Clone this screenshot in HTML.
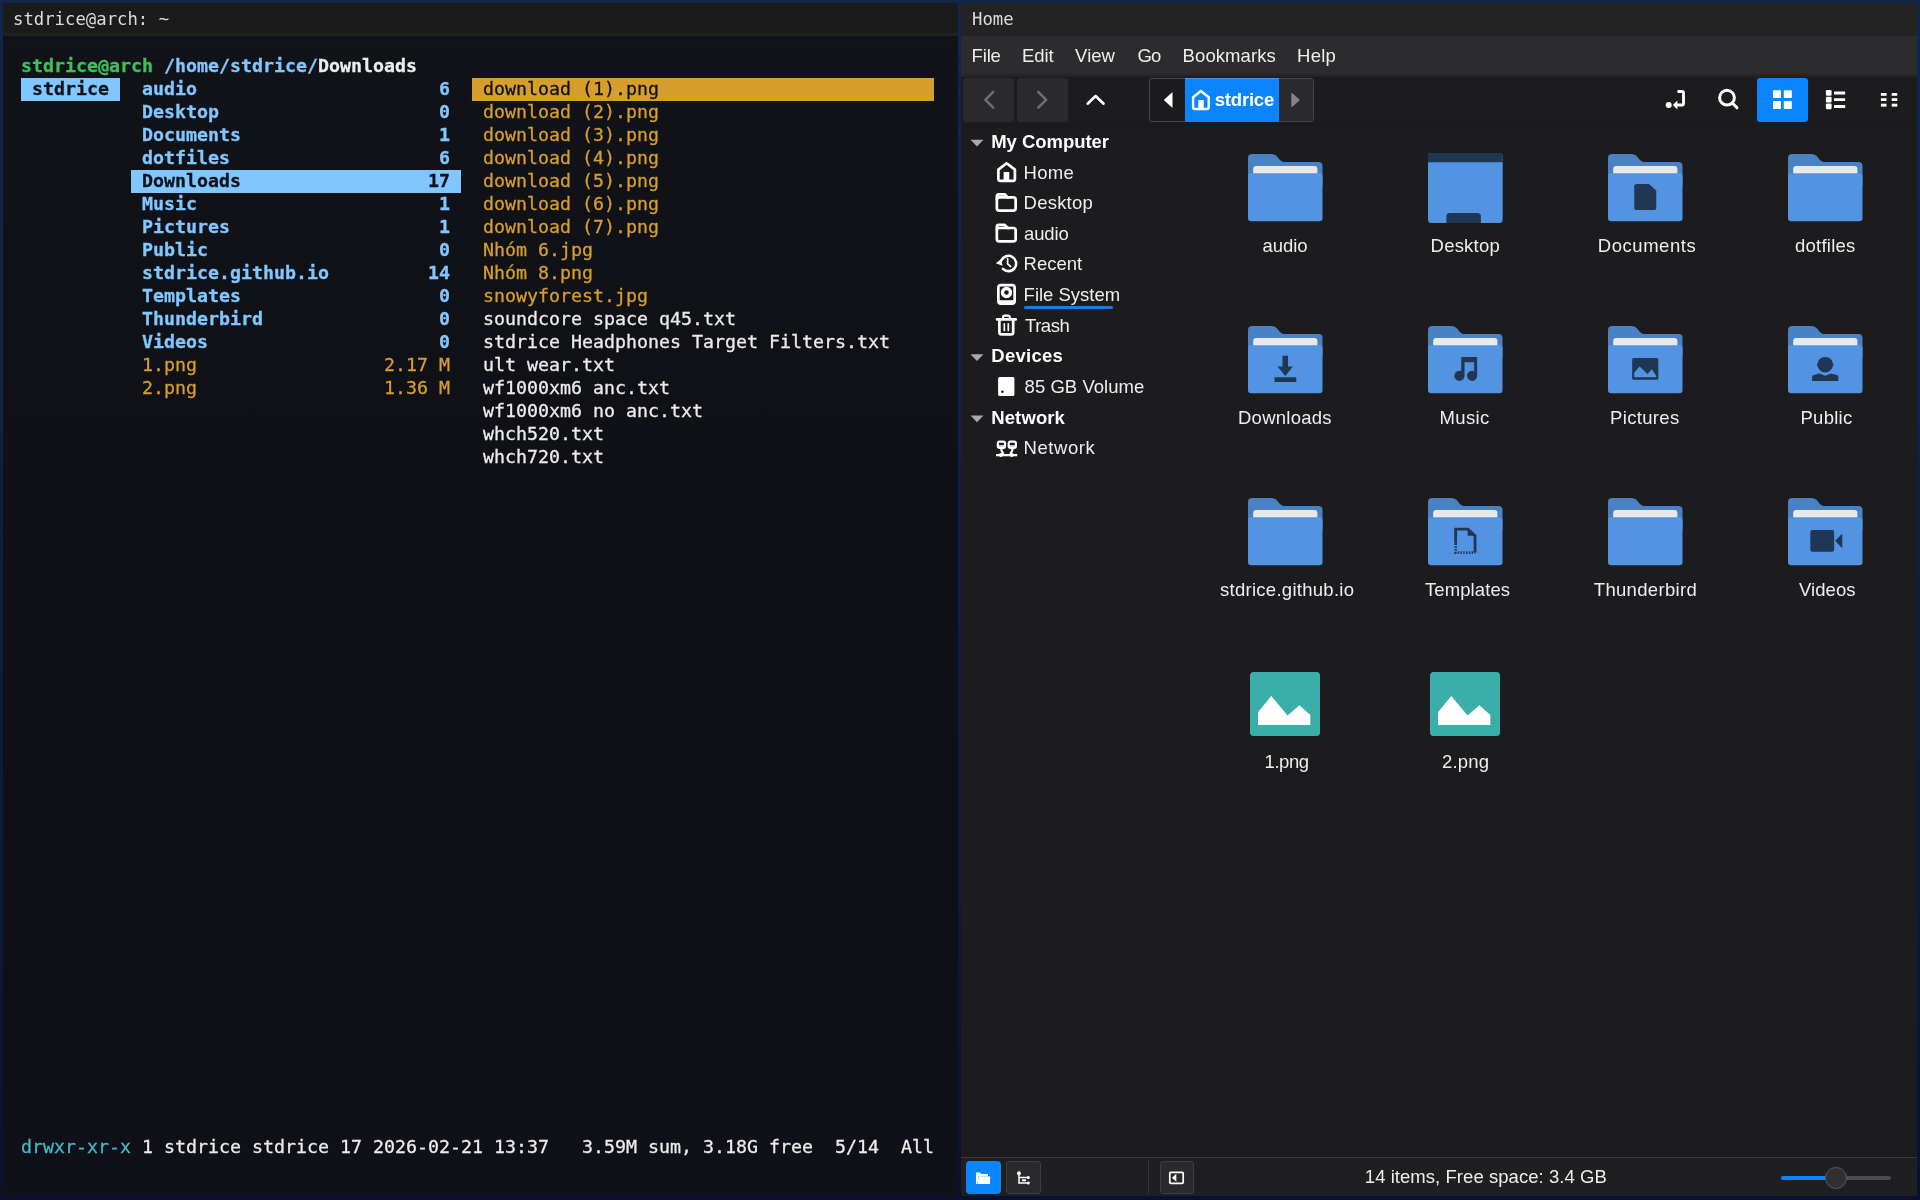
<!DOCTYPE html>
<html lang="en">
<head>
<meta charset="utf-8">
<title>Home</title>
<style>
html,body{margin:0;padding:0}
body{width:1920px;height:1200px;overflow:hidden;position:relative;background:linear-gradient(180deg,#14254c 0,#122146 30%,#0e1838 75%,#0a1130 100%);font-family:"Liberation Sans", sans-serif;}
.win{position:absolute;top:3px;height:1193px;overflow:hidden}
#term{left:3px;width:955px;background:linear-gradient(180deg,#111319 0,#101117 35%,#0f1016 60%,#0f1018 100%)}
#nemo{left:961px;width:956px;background:#1c1c1e}
.abs{position:absolute}
.tbar{position:absolute;left:0;top:0;right:0;height:33px;font-family:"DejaVu Sans Mono", "Liberation Mono", monospace;font-size:17.3px;line-height:33px;color:#dcdcdc;white-space:pre}
#term .tbar{background:#1b1b1b;border-bottom:3px solid #212122;height:30px}
#nemo .tbar{background:#232324}
.tbar span{position:absolute;top:0px;will-change:transform}
/* page-absolute text */
.t{position:absolute;white-space:pre;font-family:"Liberation Sans", sans-serif}
.c{position:absolute;white-space:pre;font-family:"DejaVu Sans Mono", "Liberation Mono", monospace;font-size:18.27px;line-height:21px;height:23px;-webkit-text-stroke:0.300px currentColor}
.ic{position:absolute;overflow:visible}
#layer{position:absolute;left:0;top:0;width:1920px;height:1200px;will-change:transform}
.btn{position:absolute;border-radius:3px;box-sizing:border-box}
</style>
</head>
<body>
<!-- ================= terminal window ================= -->
<div id="term" class="win">
  <div class="tbar"><span style="left:9.500px">stdrice@arch: ~</span></div>
</div>
<!-- ================= file manager window ================= -->
<div id="nemo" class="win">
  <div class="tbar"><span style="left:11px">Home</span></div>
  <div class="abs" style="left:0;right:0;top:33px;height:37px;background:#2c2c2e"></div>
  <div class="abs" style="left:0;right:0;top:70px;height:4px;background:linear-gradient(180deg,#2a2a2c,#212123)"></div>
  <div class="abs" style="left:0;right:0;top:121px;height:2px;background:#1a1a1c"></div>
  <div class="abs" style="left:0;right:0;top:1154px;height:1px;background:#38383a"></div>
  <div class="abs" style="left:0;right:0;top:1155px;height:38px;background:#1f1f21"></div>
</div>
<!-- page-absolute overlay layer (coordinates are screen pixels) -->
<div id="layer">
<!-- toolbar buttons -->
<div class="btn" style="left:963px;top:78px;width:51px;height:44px;background:#2a2a2c"></div>
<div class="btn" style="left:1017px;top:78px;width:51px;height:44px;background:#2a2a2c"></div>
<svg class="ic" style="left:963px;top:78px" width="160" height="44" viewBox="0 0 160 44">
  <path d="M30.200 13.900L22.400 21.800 30.200 29.700" fill="none" stroke="#6f6f71" stroke-width="2.500" stroke-linecap="round" stroke-linejoin="round"/>
  <path d="M75.300 13.900L83.100 21.800 75.300 29.700" fill="none" stroke="#6f6f71" stroke-width="2.500" stroke-linecap="round" stroke-linejoin="round"/>
  <path d="M124.600 25.700L132.600 18 140.600 25.700" fill="none" stroke="#fff" stroke-width="2.600" stroke-linecap="round" stroke-linejoin="round"/>
</svg>
<!-- path bar -->
<div class="btn" style="left:1149px;top:78px;width:165px;height:44px;border:1px solid #464648;background:#1b1b1d"></div>
<div class="abs" style="left:1278px;top:79px;width:35px;height:42px;background:#2a2a2c;border-radius:0 2px 2px 0"></div>
<div class="abs" style="left:1185px;top:78px;width:94px;height:44px;background:#0a84ff;box-shadow:inset 0 1px 0 #3d9bff"></div>
<svg class="ic" style="left:1149px;top:78px" width="165" height="44" viewBox="0 0 165 44">
  <path d="M23.500 14v16L14.750 22z" fill="#fff"/>
  <path d="M142.300 14.500v15L151 22z" fill="#858587"/>
  <!-- home glyph -->
  <path d="M44.100 19.300L51.900 13 59.700 19.300V29a2 2 0 0 1-2 2H46.100a2 2 0 0 1-2-2z" fill="none" stroke="#fff" stroke-width="2.400" stroke-linejoin="round"/>
  <rect x="49.300" y="22" width="5.400" height="9.500" fill="#fff"/>
</svg>
<!-- right toolbar icons -->
<div class="btn" style="left:1757px;top:78px;width:51px;height:44px;background:#0a84ff"></div>
<svg class="ic" style="left:1650px;top:78px" width="260" height="44" viewBox="0 0 260 44">
  <!-- toggle location entry -->
  <circle cx="18.700" cy="27" r="3" fill="#fff"/>
  <path d="M27.500 13.550H32a1.500 1.500 0 0 1 1.500 1.500V25.500a1.500 1.500 0 0 1-1.500 1.500H27" fill="none" stroke="#fff" stroke-width="2.900"/>
  <path d="M27.400 22.500v9L22.800 27z" fill="#fff"/>
  <!-- search -->
  <circle cx="77" cy="19.700" r="7.400" fill="none" stroke="#fff" stroke-width="3"/>
  <path d="M82.300 25L87 29.800" stroke="#fff" stroke-width="3" stroke-linecap="round"/>
  <!-- grid -->
  <g fill="#fff"><rect x="123" y="12.200" width="8" height="7.700" rx="0.600"/><rect x="133.800" y="12.200" width="8" height="7.700" rx="0.600"/><rect x="123" y="23.100" width="8" height="7.800" rx="0.600"/><rect x="133.800" y="23.100" width="8" height="7.800" rx="0.600"/></g>
  <!-- list -->
  <g fill="#fff"><rect x="175.900" y="12.100" width="5.700" height="5.700" rx="1.200"/><rect x="175.900" y="18.800" width="5.700" height="5.600" rx="1.200"/><rect x="175.900" y="25.600" width="5.700" height="5.600" rx="1.200"/>
  <rect x="184" y="13.600" width="11.200" height="2.800" rx="0.500"/><rect x="184" y="20.200" width="11.200" height="2.800" rx="0.500"/><rect x="184" y="27" width="11.200" height="2.900" rx="0.500"/></g>
  <!-- compact -->
  <g fill="#fff"><rect x="230.900" y="15" width="5.600" height="2.800"/><rect x="241.700" y="15" width="5.600" height="2.800"/><rect x="230.900" y="20.200" width="5.600" height="2.800"/><rect x="241.700" y="20.200" width="5.600" height="2.800"/><rect x="230.900" y="25.700" width="5.600" height="2.900"/><rect x="241.700" y="25.700" width="5.600" height="2.900"/></g>
</svg>
<!-- sidebar triangles + icons -->
<svg class="ic" style="left:961px;top:126px" width="200" height="340" viewBox="961 126 200 340">
  <g fill="#a9a9ab"><path d="M970.500 139.800h13l-6.500 6.800z"/><path d="M970.500 354.300h13l-6.500 6.800z"/><path d="M970.500 415.500h13l-6.500 6.800z"/></g>
  <g fill="none" stroke="#fff" stroke-width="2.700" stroke-linejoin="round" stroke-linecap="round">
    <!-- home -->
    <path d="M998.400 169.600L1006.650 163.300 1014.900 169.600V178.700a2.200 2.200 0 0 1-2.200 2.200H1000.600a2.200 2.200 0 0 1-2.200-2.200z"/>
    <!-- desktop folder -->
    <rect x="996.850" y="197.400" width="18.800" height="13.300" rx="2.400"/>
    <path d="M996.850 199.500V196.300a2 2 0 0 1 2-2H1004.600L1007.900 197.400"/>
    <!-- audio folder -->
    <rect x="996.850" y="228" width="18.800" height="13.300" rx="2.400"/>
    <path d="M996.850 230.100V226.900a2 2 0 0 1 2-2H1004.600L1007.900 228"/>
    <!-- recent -->
    <path d="M1001.300 260.600a7.700 7.700 0 1 1 1.700 8.300" stroke-width="2.600"/>
    <path d="M1007.600 258.600v5.300l3 2.600" stroke-width="1.700"/>
    <!-- file system -->
    <rect x="998.350" y="285.100" width="16.300" height="18.600" rx="2.600"/>
    <circle cx="1006.500" cy="292.500" r="4" stroke-width="3.400"/>
    <path d="M999 301.600h15" stroke-width="2.800"/>
    <!-- trash -->
    <path d="M997.100 319.400h18.600"/>
    <path d="M1003 318.500v-1.300a1.600 1.600 0 0 1 1.600-1.600h3.600a1.600 1.600 0 0 1 1.600 1.600v1.300" stroke-width="2.200"/>
    <path d="M999.400 320.500v11.700a2.200 2.200 0 0 0 2.200 2.200h9.400a2.200 2.200 0 0 0 2.200-2.200V320.500"/>
    <path d="M1004.300 323.800v6.600M1008.300 323.800v6.600" stroke-width="1.700"/>
  </g>
  <rect x="1003.600" y="172" width="5.700" height="9" fill="#fff"/>
  <path d="M995.800 263.200l5.200-4 1.600 6.600z" fill="#fff"/>
  <!-- volume -->
  <path d="M998.100 378.600a1.500 1.500 0 0 1 1.500-1.500h13.300a1.500 1.500 0 0 1 1.500 1.500v15.800a1.500 1.500 0 0 1-1.500 1.500H999.600a1.500 1.500 0 0 1-1.500-1.500zM1001.100 391.750a1.300 1.300 0 1 0 2.600 0a1.300 1.300 0 1 0-2.600 0z" fill="#fff" fill-rule="evenodd"/>
  <!-- network -->
  <g fill="none" stroke="#fff" stroke-width="2.200" stroke-linejoin="round">
    <rect x="997.850" y="441.600" width="7.200" height="6.200" rx="1.800"/><rect x="1008.700" y="441.600" width="7.200" height="6.200" rx="1.800"/>
    <path d="M997.850 446h7.200M1008.700 446h7.200" stroke-width="1.600"/>
    <path d="M1001.450 448v2.500l2 3.500M1012.300 448v2.500l-2 3.500M996 455.100h21.200"/>
  </g>
  <circle cx="1000.900" cy="455.100" r="2" fill="#fff"/><circle cx="1011.800" cy="455.100" r="2" fill="#fff"/>
</svg>
<div class="abs" style="left:1024px;top:306px;width:89px;height:3px;border-radius:1.500px;background:#1f7ae0"></div>
<!-- file icons -->
<svg class="ic" style="left:1247.75px;top:154px" width="74.500" height="67.200" viewBox="0 0 74.500 67.200">
<path d="M0 4a4 4 0 0 1 4-4h19.500c2.500 0 4.200 1 5.800 2.800l2 2.400c1.600 1.900 3 2.800 5.500 2.800H70.500a4 4 0 0 1 4 4v20H0z" fill="#4a80c4"/>
<rect x="5.200" y="12" width="64.200" height="12" rx="3" fill="#e9e9e9"/>
<path d="M0 21.800a2.500 2.500 0 0 1 2.500-2.500h69.500a2.500 2.500 0 0 1 2.500 2.500v42.400a3 3 0 0 1-3 3H3a3 3 0 0 1-3-3z" fill="#5294e2"/>
</svg>
<svg class="ic" style="left:1427.85px;top:153px" width="74.700" height="70" viewBox="0 0 74.700 70">
<rect x="0" y="0" width="74.700" height="70" rx="3.500" fill="#5294e2"/>
<path d="M0 3.500A3.500 3.500 0 0 1 3.500 0h67.700A3.500 3.500 0 0 1 74.700 3.500V9.200H0z" fill="#1f3755"/>
<path d="M18.400 70v-6.500a3.500 3.500 0 0 1 3.500-3.500h27.500a3.500 3.500 0 0 1 3.500 3.500V70z" fill="#1f3755"/>
</svg>
<svg class="ic" style="left:1607.75px;top:154px" width="74.500" height="67.200" viewBox="0 0 74.500 67.200">
<path d="M0 4a4 4 0 0 1 4-4h19.500c2.500 0 4.200 1 5.800 2.800l2 2.400c1.600 1.900 3 2.800 5.500 2.800H70.500a4 4 0 0 1 4 4v20H0z" fill="#4a80c4"/>
<rect x="5.200" y="12" width="64.200" height="12" rx="3" fill="#e9e9e9"/>
<path d="M0 21.800a2.500 2.500 0 0 1 2.500-2.500h69.500a2.500 2.500 0 0 1 2.500 2.500v42.400a3 3 0 0 1-3 3H3a3 3 0 0 1-3-3z" fill="#5294e2"/>
<path d="M26.250 32.200a2.200 2.200 0 0 1 2.200-2.200H41l7.250 6.500v17.400a2.200 2.200 0 0 1-2.200 2.200H28.450a2.200 2.200 0 0 1-2.200-2.200z" fill="#1f3755"/></svg>
<svg class="ic" style="left:1787.75px;top:154px" width="74.500" height="67.200" viewBox="0 0 74.500 67.200">
<path d="M0 4a4 4 0 0 1 4-4h19.500c2.500 0 4.200 1 5.800 2.800l2 2.400c1.600 1.900 3 2.800 5.500 2.800H70.500a4 4 0 0 1 4 4v20H0z" fill="#4a80c4"/>
<rect x="5.200" y="12" width="64.200" height="12" rx="3" fill="#e9e9e9"/>
<path d="M0 21.800a2.500 2.500 0 0 1 2.500-2.500h69.500a2.500 2.500 0 0 1 2.500 2.500v42.400a3 3 0 0 1-3 3H3a3 3 0 0 1-3-3z" fill="#5294e2"/>
</svg>
<svg class="ic" style="left:1247.75px;top:326px" width="74.500" height="67.200" viewBox="0 0 74.500 67.200">
<path d="M0 4a4 4 0 0 1 4-4h19.500c2.500 0 4.200 1 5.800 2.800l2 2.400c1.600 1.900 3 2.800 5.500 2.800H70.500a4 4 0 0 1 4 4v20H0z" fill="#4a80c4"/>
<rect x="5.200" y="12" width="64.200" height="12" rx="3" fill="#e9e9e9"/>
<path d="M0 21.800a2.500 2.500 0 0 1 2.500-2.500h69.500a2.500 2.500 0 0 1 2.500 2.500v42.400a3 3 0 0 1-3 3H3a3 3 0 0 1-3-3z" fill="#5294e2"/>
<path d="M34.450 29.700h5.600v10.800h4.900l-7.700 9.500-7.700-9.500h4.900zM26.550 51.200h21.700v4.700h-21.700z" fill="#1f3755"/></svg>
<svg class="ic" style="left:1427.75px;top:326px" width="74.500" height="67.200" viewBox="0 0 74.500 67.200">
<path d="M0 4a4 4 0 0 1 4-4h19.500c2.500 0 4.200 1 5.800 2.800l2 2.400c1.600 1.900 3 2.800 5.500 2.800H70.500a4 4 0 0 1 4 4v20H0z" fill="#4a80c4"/>
<rect x="5.200" y="12" width="64.200" height="12" rx="3" fill="#e9e9e9"/>
<path d="M0 21.800a2.500 2.500 0 0 1 2.500-2.500h69.500a2.500 2.500 0 0 1 2.500 2.500v42.400a3 3 0 0 1-3 3H3a3 3 0 0 1-3-3z" fill="#5294e2"/>
<path d="M33.250 31h15.900v18.800a5.100 5.100 0 1 1-3-4.650V36.300h-9.600v13.500a5.100 5.100 0 1 1-3.300-4.780z" fill="#1f3755"/></svg>
<svg class="ic" style="left:1607.75px;top:326px" width="74.500" height="67.200" viewBox="0 0 74.500 67.200">
<path d="M0 4a4 4 0 0 1 4-4h19.500c2.500 0 4.200 1 5.800 2.800l2 2.400c1.600 1.900 3 2.800 5.500 2.800H70.500a4 4 0 0 1 4 4v20H0z" fill="#4a80c4"/>
<rect x="5.200" y="12" width="64.200" height="12" rx="3" fill="#e9e9e9"/>
<path d="M0 21.800a2.500 2.500 0 0 1 2.500-2.500h69.500a2.500 2.500 0 0 1 2.500 2.500v42.400a3 3 0 0 1-3 3H3a3 3 0 0 1-3-3z" fill="#5294e2"/>
<path d="M25.650 32.100h23.200a1.500 1.500 0 0 1 1.500 1.500v18.700a1.500 1.500 0 0 1-1.500 1.500h-23.200a1.500 1.500 0 0 1-1.500-1.500V33.600a1.500 1.500 0 0 1 1.500-1.500zM26.250 51.200h22V49.800l-4.500-6.500-4.200 4.600-7.900-7.400-5.400 6z" fill="#1f3755" fill-rule="evenodd"/></svg>
<svg class="ic" style="left:1787.75px;top:326px" width="74.500" height="67.200" viewBox="0 0 74.500 67.200">
<path d="M0 4a4 4 0 0 1 4-4h19.500c2.500 0 4.200 1 5.800 2.800l2 2.400c1.600 1.900 3 2.800 5.500 2.800H70.500a4 4 0 0 1 4 4v20H0z" fill="#4a80c4"/>
<rect x="5.200" y="12" width="64.200" height="12" rx="3" fill="#e9e9e9"/>
<path d="M0 21.800a2.500 2.500 0 0 1 2.500-2.500h69.500a2.500 2.500 0 0 1 2.500 2.500v42.400a3 3 0 0 1-3 3H3a3 3 0 0 1-3-3z" fill="#5294e2"/>
<path d="M37.250 30.900c4.200 0 7.300 2.800 7.600 6.600 0.900 0.300 1 2.300 0 2.600-0.600 3.600-3.800 6.400-7.600 6.400s-7-2.800-7.600-6.400c-1-0.300-0.900-2.300 0-2.600 0.300-3.800 3.400-6.600 7.600-6.600zM24.150 54.900v-3.900c0-1 0.500-1.800 1.500-2.100l5.850-1.500 5.750 2.400 5.750-2.400 5.850 1.500c1 0.300 1.500 1.100 1.500 2.100v3.900z" fill="#1f3755"/></svg>
<svg class="ic" style="left:1247.75px;top:498px" width="74.500" height="67.200" viewBox="0 0 74.500 67.200">
<path d="M0 4a4 4 0 0 1 4-4h19.500c2.500 0 4.200 1 5.800 2.800l2 2.400c1.600 1.900 3 2.800 5.500 2.800H70.500a4 4 0 0 1 4 4v20H0z" fill="#4a80c4"/>
<rect x="5.200" y="12" width="64.200" height="12" rx="3" fill="#e9e9e9"/>
<path d="M0 21.800a2.500 2.500 0 0 1 2.500-2.500h69.500a2.500 2.500 0 0 1 2.500 2.500v42.400a3 3 0 0 1-3 3H3a3 3 0 0 1-3-3z" fill="#5294e2"/>
</svg>
<svg class="ic" style="left:1427.75px;top:498px" width="74.500" height="67.200" viewBox="0 0 74.500 67.200">
<path d="M0 4a4 4 0 0 1 4-4h19.500c2.500 0 4.200 1 5.800 2.800l2 2.400c1.600 1.900 3 2.800 5.500 2.800H70.500a4 4 0 0 1 4 4v20H0z" fill="#4a80c4"/>
<rect x="5.200" y="12" width="64.200" height="12" rx="3" fill="#e9e9e9"/>
<path d="M0 21.800a2.500 2.500 0 0 1 2.500-2.500h69.500a2.500 2.500 0 0 1 2.500 2.500v42.400a3 3 0 0 1-3 3H3a3 3 0 0 1-3-3z" fill="#5294e2"/>
<path d="M27.650 45.500V31.200H40l7.050 6.600V54.700" fill="none" stroke="#1f3755" stroke-width="2.800"/><path d="M27.650 45.500V54.700H47" fill="none" stroke="#1f3755" stroke-width="2.800" stroke-dasharray="1.400 1.400"/><path d="M39.600 29.800v8h8.850z" fill="#1f3755"/></svg>
<svg class="ic" style="left:1607.75px;top:498px" width="74.500" height="67.200" viewBox="0 0 74.500 67.200">
<path d="M0 4a4 4 0 0 1 4-4h19.500c2.500 0 4.200 1 5.800 2.800l2 2.400c1.600 1.900 3 2.800 5.500 2.800H70.500a4 4 0 0 1 4 4v20H0z" fill="#4a80c4"/>
<rect x="5.200" y="12" width="64.200" height="12" rx="3" fill="#e9e9e9"/>
<path d="M0 21.800a2.500 2.500 0 0 1 2.500-2.500h69.500a2.500 2.500 0 0 1 2.500 2.500v42.400a3 3 0 0 1-3 3H3a3 3 0 0 1-3-3z" fill="#5294e2"/>
</svg>
<svg class="ic" style="left:1787.75px;top:498px" width="74.500" height="67.200" viewBox="0 0 74.500 67.200">
<path d="M0 4a4 4 0 0 1 4-4h19.500c2.500 0 4.200 1 5.800 2.800l2 2.400c1.600 1.900 3 2.800 5.500 2.800H70.500a4 4 0 0 1 4 4v20H0z" fill="#4a80c4"/>
<rect x="5.200" y="12" width="64.200" height="12" rx="3" fill="#e9e9e9"/>
<path d="M0 21.800a2.500 2.500 0 0 1 2.500-2.500h69.500a2.500 2.500 0 0 1 2.500 2.500v42.400a3 3 0 0 1-3 3H3a3 3 0 0 1-3-3z" fill="#5294e2"/>
<path d="M24.350 32.100h19.800a2 2 0 0 1 2 2v17.700a2 2 0 0 1-2 2h-19.800a2 2 0 0 1-2-2V34.100a2 2 0 0 1 2-2zM47.050 42.800l7.200-7v14.500z" fill="#1f3755"/></svg>
<svg class="ic" style="left:1250px;top:672px" width="70" height="64" viewBox="0 0 70 64">
<rect width="70" height="64" rx="3.500" fill="#3aafa9"/>
<path d="M8 53V40.200L21.300 24l16.300 19.400L49.400 33.300 60.300 43v10z" fill="#fff"/>
</svg>
<svg class="ic" style="left:1430px;top:672px" width="70" height="64" viewBox="0 0 70 64">
<rect width="70" height="64" rx="3.500" fill="#3aafa9"/>
<path d="M8 53V40.200L21.300 24l16.300 19.400L49.400 33.300 60.300 43v10z" fill="#fff"/>
</svg>
<!-- status bar widgets -->
<div class="btn" style="left:966px;top:1161px;width:35px;height:33px;background:#0a84ff;border-radius:4px"></div>
<div class="btn" style="left:1006px;top:1161px;width:35px;height:33px;background:#2a2a2c;border:1px solid #3d3d3f"></div>
<div class="abs" style="left:1148px;top:1160px;width:1px;height:35px;background:#343436"></div>
<div class="btn" style="left:1160px;top:1161px;width:34px;height:33px;background:#2a2a2c;border:1px solid #3d3d3f"></div>
<svg class="ic" style="left:961px;top:1158px" width="240" height="38" viewBox="961 1158 240 38">
  <!-- folder (places) -->
  <path d="M976 1172.500h4.200l1.300 1.500h6.500v2.500h-9.500l-1 7.500H976z" fill="#fff"/>
  <path d="M978.700 1176.500h11.500l-0.200 7.500h-12.300z" fill="#fff"/>
  <!-- tree -->
  <circle cx="1019" cy="1173.300" r="2" fill="#fff"/>
  <path d="M1019 1174v9h9M1019 1177.500h9" fill="none" stroke="#fff" stroke-width="1.500"/>
  <circle cx="1028.300" cy="1177.500" r="1.500" fill="#fff"/><circle cx="1028.300" cy="1183" r="1.500" fill="#fff"/>
  <rect x="1022" y="1179.300" width="4" height="2" fill="#fff"/>
  <!-- sidebar toggle -->
  <rect x="1169.800" y="1172.300" width="13.400" height="11" rx="1" fill="none" stroke="#fff" stroke-width="1.700"/>
  <path d="M1176.300 1173.800v8l-4.300-4z" fill="#fff"/>
</svg>
<!-- zoom slider -->
<div class="abs" style="left:1781px;top:1176px;width:110px;height:4px;border-radius:2px;background:#4b4b4d"></div>
<div class="abs" style="left:1781px;top:1176px;width:50px;height:4px;border-radius:2px;background:#0a84ff"></div>
<div class="abs" style="left:1825px;top:1167px;width:22px;height:22px;border-radius:50%;box-sizing:border-box;background:#303032;border:1px solid #58585a"></div>
<!-- file manager text -->
<span class="t" style="left:971.60px;top:43.70px;font-size:18.5px;line-height:24px;letter-spacing:-0.174px;color:#eeeeee;">File</span>
<span class="t" style="left:1022.10px;top:43.70px;font-size:18.5px;line-height:24px;letter-spacing:-0.079px;color:#eeeeee;">Edit</span>
<span class="t" style="left:1075.10px;top:43.70px;font-size:18.5px;line-height:24px;letter-spacing:0.032px;color:#eeeeee;">View</span>
<span class="t" style="left:1137.60px;top:43.70px;font-size:18.5px;line-height:24px;letter-spacing:-0.890px;color:#eeeeee;">Go</span>
<span class="t" style="left:1182.60px;top:43.70px;font-size:18.5px;line-height:24px;letter-spacing:0.090px;color:#eeeeee;">Bookmarks</span>
<span class="t" style="left:1297.10px;top:43.70px;font-size:18.5px;line-height:24px;letter-spacing:0.247px;color:#eeeeee;">Help</span>
<span class="t" style="left:1214.80px;top:87.50px;font-size:18.5px;line-height:24px;letter-spacing:-0.213px;color:#ffffff;font-weight:700;">stdrice</span>
<span class="t" style="left:991.25px;top:129.90px;font-size:18.5px;line-height:24px;letter-spacing:-0.050px;color:#ffffff;font-weight:700;">My Computer</span>
<span class="t" style="left:1023.60px;top:160.90px;font-size:18.5px;line-height:24px;letter-spacing:0.280px;color:#eeeeee;">Home</span>
<span class="t" style="left:1023.60px;top:190.90px;font-size:18.5px;line-height:24px;letter-spacing:0.220px;color:#eeeeee;">Desktop</span>
<span class="t" style="left:1024.00px;top:221.90px;font-size:18.5px;line-height:24px;letter-spacing:-0.119px;color:#eeeeee;">audio</span>
<span class="t" style="left:1023.60px;top:251.90px;font-size:18.5px;line-height:24px;letter-spacing:-0.015px;color:#eeeeee;">Recent</span>
<span class="t" style="left:1023.60px;top:282.90px;font-size:18.5px;line-height:24px;letter-spacing:-0.007px;color:#eeeeee;">File System</span>
<span class="t" style="left:1025.00px;top:313.90px;font-size:18.5px;line-height:24px;letter-spacing:-0.478px;color:#eeeeee;">Trash</span>
<span class="t" style="left:991.25px;top:343.90px;font-size:18.5px;line-height:24px;letter-spacing:0.266px;color:#ffffff;font-weight:700;">Devices</span>
<span class="t" style="left:1024.60px;top:374.90px;font-size:18.5px;line-height:24px;letter-spacing:0.036px;color:#eeeeee;">85 GB Volume</span>
<span class="t" style="left:991.25px;top:405.90px;font-size:18.5px;line-height:24px;letter-spacing:0.108px;color:#ffffff;font-weight:700;">Network</span>
<span class="t" style="left:1023.60px;top:435.90px;font-size:18.5px;line-height:24px;letter-spacing:0.534px;color:#eeeeee;">Network</span>
<span class="t" style="left:1262.40px;top:233.90px;font-size:18.5px;line-height:24px;letter-spacing:-0.032px;color:#eeeeee;">audio</span>
<span class="t" style="left:1430.60px;top:233.90px;font-size:18.5px;line-height:24px;letter-spacing:0.204px;color:#eeeeee;">Desktop</span>
<span class="t" style="left:1597.75px;top:233.90px;font-size:18.5px;line-height:24px;letter-spacing:0.554px;color:#eeeeee;">Documents</span>
<span class="t" style="left:1795.00px;top:233.90px;font-size:18.5px;line-height:24px;letter-spacing:0.233px;color:#eeeeee;">dotfiles</span>
<span class="t" style="left:1238.00px;top:405.90px;font-size:18.5px;line-height:24px;letter-spacing:0.247px;color:#eeeeee;">Downloads</span>
<span class="t" style="left:1439.60px;top:405.90px;font-size:18.5px;line-height:24px;letter-spacing:0.360px;color:#eeeeee;">Music</span>
<span class="t" style="left:1610.00px;top:405.90px;font-size:18.5px;line-height:24px;letter-spacing:0.346px;color:#eeeeee;">Pictures</span>
<span class="t" style="left:1800.50px;top:405.90px;font-size:18.5px;line-height:24px;letter-spacing:0.273px;color:#eeeeee;">Public</span>
<span class="t" style="left:1220.00px;top:577.90px;font-size:18.5px;line-height:24px;letter-spacing:0.279px;color:#eeeeee;">stdrice.github.io</span>
<span class="t" style="left:1425.00px;top:577.90px;font-size:18.5px;line-height:24px;letter-spacing:0.086px;color:#eeeeee;">Templates</span>
<span class="t" style="left:1593.75px;top:577.90px;font-size:18.5px;line-height:24px;letter-spacing:0.329px;color:#eeeeee;">Thunderbird</span>
<span class="t" style="left:1799.00px;top:577.90px;font-size:18.5px;line-height:24px;letter-spacing:0.064px;color:#eeeeee;">Videos</span>
<span class="t" style="left:1264.60px;top:749.90px;font-size:18.5px;line-height:24px;letter-spacing:-0.464px;color:#eeeeee;">1.png</span>
<span class="t" style="left:1441.90px;top:749.90px;font-size:18.5px;line-height:24px;letter-spacing:0.211px;color:#eeeeee;">2.png</span>
<span class="t" style="left:1364.80px;top:1164.80px;font-size:18.5px;line-height:24px;letter-spacing:0.049px;color:#eeeeee;">14 items, Free space: 3.4 GB</span>
<!-- terminal text -->
<span class="c" style="left:21px;top:55px;color:#3fc05a;font-weight:700;">stdrice@arch</span>
<span class="c" style="left:164px;top:55px;color:#80c6ff;font-weight:700;">/home/stdrice/</span>
<span class="c" style="left:318px;top:55px;color:#ececec;font-weight:700;">Downloads</span>
<span class="c" style="left:21px;top:78px;color:#11131a;font-weight:700;background:#80c6ff;width:99px;"> stdrice </span>
<span class="c" style="left:131px;top:78px;color:#80c6ff;font-weight:700;"> audio                      6 </span>
<span class="c" style="left:131px;top:101px;color:#80c6ff;font-weight:700;"> Desktop                    0 </span>
<span class="c" style="left:131px;top:124px;color:#80c6ff;font-weight:700;"> Documents                  1 </span>
<span class="c" style="left:131px;top:147px;color:#80c6ff;font-weight:700;"> dotfiles                   6 </span>
<span class="c" style="left:131px;top:170px;color:#11131a;font-weight:700;background:#80c6ff;width:330px;"> Downloads                 17 </span>
<span class="c" style="left:131px;top:193px;color:#80c6ff;font-weight:700;"> Music                      1 </span>
<span class="c" style="left:131px;top:216px;color:#80c6ff;font-weight:700;"> Pictures                   1 </span>
<span class="c" style="left:131px;top:239px;color:#80c6ff;font-weight:700;"> Public                     0 </span>
<span class="c" style="left:131px;top:262px;color:#80c6ff;font-weight:700;"> stdrice.github.io         14 </span>
<span class="c" style="left:131px;top:285px;color:#80c6ff;font-weight:700;"> Templates                  0 </span>
<span class="c" style="left:131px;top:308px;color:#80c6ff;font-weight:700;"> Thunderbird                0 </span>
<span class="c" style="left:131px;top:331px;color:#80c6ff;font-weight:700;"> Videos                     0 </span>
<span class="c" style="left:131px;top:354px;color:#d69e2b;"> 1.png                 2.17 M </span>
<span class="c" style="left:131px;top:377px;color:#d69e2b;"> 2.png                 1.36 M </span>
<span class="c" style="left:472px;top:78px;color:#11131a;background:#d69e2b;width:462px;"> download (1).png</span>
<span class="c" style="left:483px;top:101px;color:#d69e2b;">download (2).png</span>
<span class="c" style="left:483px;top:124px;color:#d69e2b;">download (3).png</span>
<span class="c" style="left:483px;top:147px;color:#d69e2b;">download (4).png</span>
<span class="c" style="left:483px;top:170px;color:#d69e2b;">download (5).png</span>
<span class="c" style="left:483px;top:193px;color:#d69e2b;">download (6).png</span>
<span class="c" style="left:483px;top:216px;color:#d69e2b;">download (7).png</span>
<span class="c" style="left:483px;top:239px;color:#d69e2b;">Nhóm 6.jpg</span>
<span class="c" style="left:483px;top:262px;color:#d69e2b;">Nhóm 8.png</span>
<span class="c" style="left:483px;top:285px;color:#d69e2b;">snowyforest.jpg</span>
<span class="c" style="left:483px;top:308px;color:#ececec;">soundcore space q45.txt</span>
<span class="c" style="left:483px;top:331px;color:#ececec;">stdrice Headphones Target Filters.txt</span>
<span class="c" style="left:483px;top:354px;color:#ececec;">ult wear.txt</span>
<span class="c" style="left:483px;top:377px;color:#ececec;">wf1000xm6 anc.txt</span>
<span class="c" style="left:483px;top:400px;color:#ececec;">wf1000xm6 no anc.txt</span>
<span class="c" style="left:483px;top:423px;color:#ececec;">whch520.txt</span>
<span class="c" style="left:483px;top:446px;color:#ececec;">whch720.txt</span>
<span class="c" style="left:21px;top:1136px;color:#45b9c6;">drwxr-xr-x</span>
<span class="c" style="left:142px;top:1136px;color:#ececec;">1 stdrice stdrice 17 2026-02-21 13:37</span>
<span class="c" style="left:582px;top:1136px;color:#ececec;">3.59M sum, 3.18G free  5/14  All</span>
</div>
</body>
</html>
